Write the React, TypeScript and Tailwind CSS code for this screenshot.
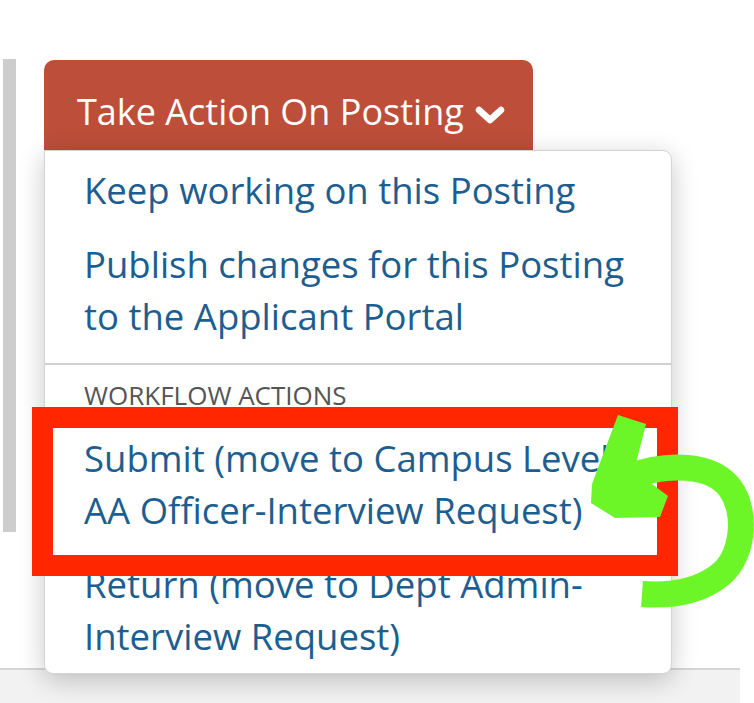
import { type ReactNode } from 'react';

const font = { fontFamily: '"Open Sans", "Noto Sans", sans-serif' };

type MenuItemProps = {
  children: ReactNode;
};

const MenuItem = ({ children }: MenuItemProps) => (
  <a className="block px-[39px] py-[11px] text-[36.5px] leading-[52px] text-[#1d5e90]">{children}</a>
);

const ChevronDown = () => (
  <svg width="30" height="20" viewBox="0 0 30 20" className="ml-[11px] mt-[20px]">
    <polyline points="4,4 15,14 26,4" fill="none" stroke="white" strokeWidth="6.5" strokeLinejoin="round" strokeLinecap="round" />
  </svg>
);

const GreenArrow = () => (
  <svg className="pointer-events-none absolute left-0 top-0" width="754" height="703" viewBox="0 0 754 703">
    <polygon points="618,415 646,424 636,463 652,484 668,496 660,517 615,518 591,503 592,484" fill="#6cf527" />
    <path
      d="M 628 477 C 668 462, 712 464, 730 488 C 748 512, 744 560, 716 578 C 696 592, 670 596, 642 594"
      fill="none"
      stroke="#6cf527"
      strokeWidth="26"
      strokeLinecap="butt"
    />
  </svg>
);

const App = () => (
  <div className="relative h-[703px] w-[754px] overflow-hidden bg-white" style={font}>
    <div className="flex h-[668px]">
      <div className="ml-[3px] mt-[59px] h-[473px] w-[13px] bg-[#cdcdcd]" />
      <div className="relative ml-[28px] mt-[60px] self-start">
        <button className="flex w-[489px] items-start rounded-t-[10px] bg-[#bd4e3a] pb-[12px] pl-[33px] pt-[26px] text-[36px] leading-[52px] text-white">
          <span>Take Action On Posting</span>
          <ChevronDown />
        </button>
        <div className="absolute left-0 top-full z-10 w-[628px] rounded-b-[9px] rounded-tr-[9px] border border-[#d3d3d3] bg-white pt-[2px] shadow-[0_6px_26px_rgba(0,0,0,0.22)]">
          <MenuItem>Keep working on this Posting</MenuItem>
          <MenuItem>
            Publish changes for this Posting
            <br />
            to the Applicant Portal
          </MenuItem>
          <div className="mt-[10px] h-[2px] bg-[#d0d0d0]" />
          <div className="px-[39px] pt-[15px] pb-[11px] text-[26px] uppercase leading-[30px] text-[#555555]">
            Workflow Actions
          </div>
          <MenuItem>
            Submit (move to Campus Level
            <br />
            AA Officer-Interview Request)
          </MenuItem>
          <MenuItem>
            Return (move to Dept Admin-
            <br />
            Interview Request)
          </MenuItem>
        </div>
      </div>
    </div>
    <div className="h-[35px] w-[740px] border-t-2 border-[#d6d6d6] bg-[#f2f2f2]" />
    <div className="pointer-events-none absolute left-[32px] top-[407px] z-20 h-[169px] w-[646px] border-[21px] border-[#ff2600]" />
    <div className="absolute left-0 top-0 z-30">
      <GreenArrow />
    </div>
  </div>
);

export default App;
